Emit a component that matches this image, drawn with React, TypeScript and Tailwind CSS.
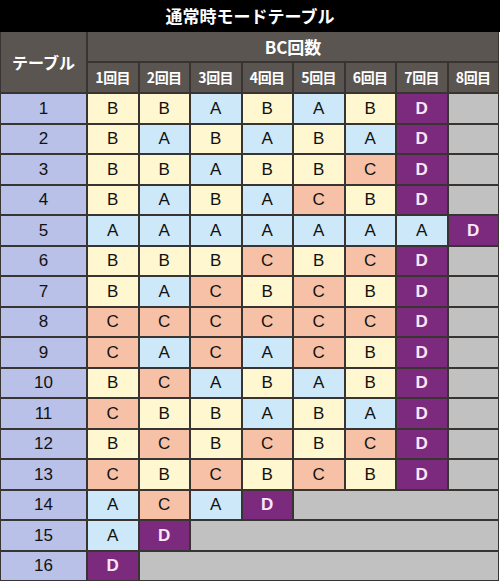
const rows: string[] = [
  "BBABABD",
  "BABABAD",
  "BBABBCD",
  "BABACBD",
  "AAAAAAAD",
  "BBBCBCD",
  "BACBCBD",
  "CCCCCCD",
  "CACACBD",
  "BCABABD",
  "CBBABAD",
  "BCBCBCD",
  "CBCBCBD",
  "ACAD",
  "AD",
  "D",
]

const cellColor: Record<string, string> = {
  A: "bg-[#cde8f8] text-[#111]",
  B: "bg-[#fff7d0] text-[#111]",
  C: "bg-[#f6c1a6] text-[#111]",
  D: "bg-[#7c2a7d] text-[#fbe6fb] font-bold",
}

const spanClass: Record<number, string> = {
  1: "col-span-1",
  2: "col-span-2",
  3: "col-span-3",
  4: "col-span-4",
  5: "col-span-5",
  6: "col-span-6",
  7: "col-span-7",
}

const jp = "font-['Noto_Sans_CJK_JP',sans-serif]"
const latin = "font-['Liberation_Sans',Arial,sans-serif]"

export default function App() {
  return (
    <div className="w-[500px] h-[585px] bg-white">
      <div className={`h-[32px] bg-black text-white flex items-center justify-center text-[17px] font-bold ${jp}`}>
        通常時モードテーブル
      </div>

      <div className="w-[499px] grid grid-cols-[85px_repeat(8,minmax(0,1fr))] gap-[2px] bg-[#383431] px-[1px] pb-[1px]">
        <div className={`row-span-2 bg-[#5a5551] text-white font-bold text-[16px] flex items-center justify-center ${jp}`}>
          テーブル
        </div>
        <div className={`col-span-8 h-[29px] bg-[#5a5551] text-white font-bold text-[17px] flex items-center justify-center ${jp}`}>
          BC回数
        </div>
        {Array.from({ length: 8 }).map((_, i) => (
          <div
            key={i}
            className={`h-[29px] bg-[#5a5551] text-white font-bold text-[14px] tracking-[-0.5px] flex items-center justify-center ${jp}`}
          >
            {i + 1}回目
          </div>
        ))}

        {rows.map((r, ri) => {
          const empty = 8 - r.length
          return [
            <div
              key={`n${ri}`}
              className={`h-[28.5px] bg-[#b9c1e8] text-[#111] text-[17px] flex items-center justify-center ${latin}`}
            >
              {ri + 1}
            </div>,
            ...r.split("").map((c, ci) => (
              <div
                key={`c${ri}-${ci}`}
                className={`h-[28.5px] text-[17px] flex items-center justify-center ${latin} ${cellColor[c]}`}
              >
                {c}
              </div>
            )),
            empty > 0 ? (
              <div key={`e${ri}`} className={`h-[28.5px] bg-[#c1c1c1] ${spanClass[empty]}`} />
            ) : null,
          ]
        })}
      </div>
    </div>
  )
}
